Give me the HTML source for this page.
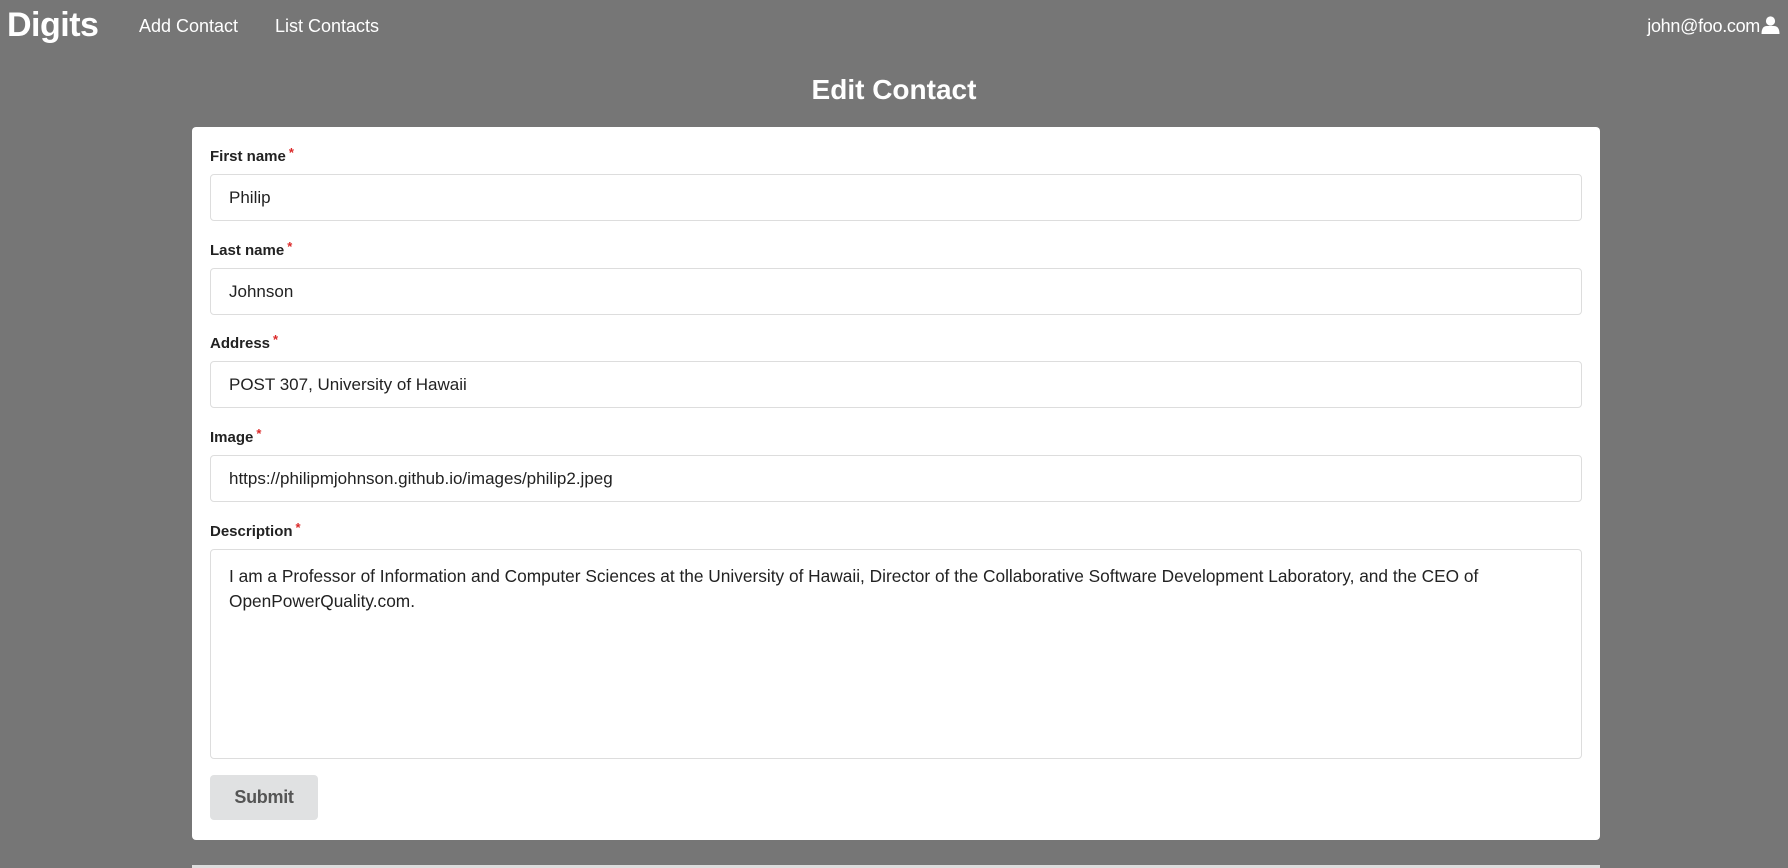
<!DOCTYPE html>
<html><head><meta charset="utf-8"><style>
*{box-sizing:border-box;margin:0;padding:0}
body{width:1788px;height:868px;background:#767676;font-family:"Liberation Sans",sans-serif;position:relative;overflow:hidden}
.nav{position:absolute;left:0;top:0;width:100%;height:54px;color:#fff}
.logo{position:absolute;left:7px;top:6px;font-size:34px;font-weight:bold;letter-spacing:-0.5px}
.link{position:absolute;top:16px;font-size:18px}
h1{position:absolute;left:0;width:100%;top:74px;text-align:center;color:#fff;font-size:28px;font-weight:bold}
.card{position:absolute;left:192px;top:127px;width:1408px;height:713px;background:#fff;border-radius:4px}
.lbl{position:absolute;left:18px;font-size:15px;font-weight:bold;color:#222}
.lbl span{color:#db2828;font-size:13px;vertical-align:top;margin-left:3px;position:relative;top:-3px}
.inp{position:absolute;left:18px;width:1372px;height:47px;border:1px solid #ddd;border-radius:4px;font-size:17px;color:#222;padding:13px 18px}
.ta{height:210px;padding:14px 18px;line-height:25px;font-size:17.3px}
.btn{position:absolute;left:18px;top:648px;width:108px;height:45px;background:#e0e1e2;border-radius:4px;color:#555;font-size:18px;text-align:center;line-height:45px;font-weight:bold;letter-spacing:-0.3px}
.bl{position:absolute;left:192px;top:865px;width:1408px;height:3px;background:#ddd}
</style></head><body>
<div class="nav">
<div class="logo">Digits</div>
<div class="link" style="left:139px">Add Contact</div>
<div class="link" style="left:275px">List Contacts</div>
<div class="link" style="right:28px;letter-spacing:-0.3px">john@foo.com</div>
<svg style="position:absolute;left:1761px;top:16px" width="19" height="18" viewBox="0 0 19 18"><circle cx="9.5" cy="5" r="4.6" fill="#fff"/><path d="M0.5 18 Q0.5 10 6 10 L13 10 Q18.5 10 18.5 18 Z" fill="#fff"/></svg>
</div>
<h1>Edit Contact</h1>
<div class="card">
<div class="lbl" style="top:21px">First name<span>*</span></div>
<div class="inp" style="top:47px">Philip</div>
<div class="lbl" style="top:115px">Last name<span>*</span></div>
<div class="inp" style="top:141px">Johnson</div>
<div class="lbl" style="top:208px">Address<span>*</span></div>
<div class="inp" style="top:234px">POST 307, University of Hawaii</div>
<div class="lbl" style="top:302px">Image<span>*</span></div>
<div class="inp" style="top:328px">https://philipmjohnson.github.io/images/philip2.jpeg</div>
<div class="lbl" style="top:396px">Description<span>*</span></div>
<div class="inp ta" style="top:422px">I am a Professor of Information and Computer Sciences at the University of Hawaii, Director of the Collaborative Software Development Laboratory, and the CEO of OpenPowerQuality.com.</div>
<div class="btn">Submit</div>
</div>
<div class="bl"></div>
</body></html>
